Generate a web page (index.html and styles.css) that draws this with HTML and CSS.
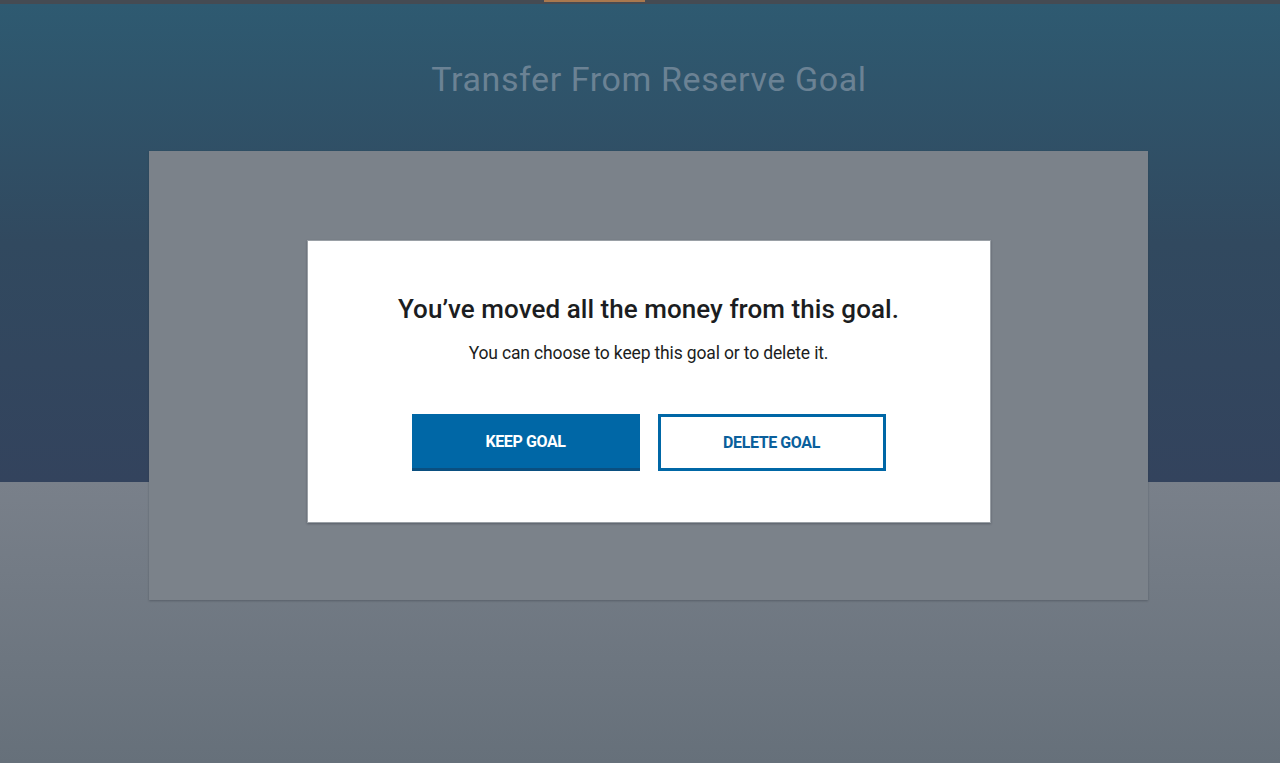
FILE: index.html
```html
<!DOCTYPE html>
<html lang="en">

<head>
    <meta charset="UTF-8">
    <meta name="viewport" content="width=device-width, initial-scale=1.0">
    <title>Transfer From Reserve Goal</title>
    <link rel="stylesheet" href="styles.css">
</head>

<body>
    <div class="topbar">
        <span class="topbar-active"></span>
    </div>

    <div class="hero">
        <h1>Transfer From Reserve Goal</h1>
    </div>

    <div class="page">
        <div class="panel">
            <div class="modal">
                <h2>You’ve moved all the money from this goal.</h2>
                <p>You can choose to keep this goal or to delete it.</p>
                <div class="actions">
                    <button class="btn btn-primary">KEEP GOAL</button>
                    <button class="btn btn-outline">DELETE GOAL</button>
                </div>
            </div>
        </div>
    </div>
</body>

</html>
```

FILE: styles.css
```css
:root {
    --blue: #0067a6;
    --blue-dark: #0a4f80;
    --text: #1b1d21;
    --overlay: #7b828a;
}

body {
    margin: 0;
    font-family: 'Roboto', 'Liberation Sans', sans-serif;
    background: linear-gradient(180deg, #79808a 482px, #66707a 100%);
    min-height: 763px;
    overflow: hidden;
}

.topbar {
    height: 4px;
    background: #454b53;
    display: flex;
    justify-content: center;
}

.topbar-active {
    width: 101px;
    height: 2px;
    margin-left: -92px;
    background: #a9784e;
}

.hero {
    height: 478px;
    background: linear-gradient(180deg, #2e5a71 0%, #31495f 50%, #33435d 100%);
    padding: 55px 0 0 18px;
    box-sizing: border-box;
}

.hero h1 {
    margin: 0;
    text-align: center;
    font-size: 34px;
    font-weight: 400;
    letter-spacing: 0.6px;
    color: #6b8294;
}

.page {
    margin-top: -331px;
    padding: 0 0 163px 17px;
}

.panel {
    width: 999px;
    height: 449px;
    margin: 0 auto;
    box-sizing: border-box;
    background: var(--overlay);
    box-shadow: 0 1px 2px rgba(40, 46, 54, 0.35);
    display: flex;
    justify-content: center;
    padding-top: 89px;
}

.modal {
    width: 684px;
    height: 283px;
    box-sizing: border-box;
    background: #fff;
    border: 1px solid #9aa0a6;
    box-shadow: 0 1px 2px rgba(40, 46, 54, 0.4);
    text-align: center;
    padding-top: 53px;
}

.modal h2 {
    margin: 0;
    font-size: 26px;
    font-weight: 500;
    letter-spacing: 0.05px;
    color: var(--text);
}

.modal p {
    margin: 19px 0 0;
    font-size: 17.5px;
    color: var(--text);
    letter-spacing: -0.15px;
}

.actions {
    display: flex;
    justify-content: center;
    gap: 18px;
    margin-top: 51px;
}

.btn {
    width: 228px;
    height: 57px;
    font-family: inherit;
    font-size: 16px;
    font-weight: 700;
    letter-spacing: -0.4px;
    cursor: pointer;
    box-sizing: border-box;
}

.btn-primary {
    background: var(--blue);
    color: #fff;
    border: none;
    border-bottom: 3px solid var(--blue-dark);
}

.btn-outline {
    background: #fff;
    color: #0a5f9c;
    border: 3px solid var(--blue);
}
```
